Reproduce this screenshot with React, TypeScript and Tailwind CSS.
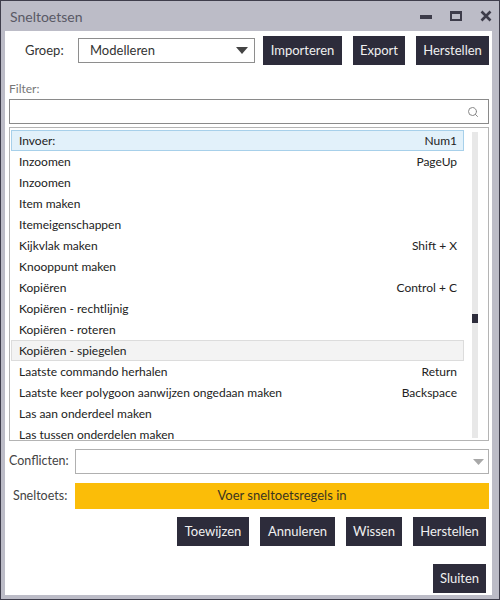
import { Search } from 'lucide-react'

const rows: [string, string][] = [
  ['Invoer:', 'Num1'],
  ['Inzoomen', 'PageUp'],
  ['Inzoomen', ''],
  ['Item maken', ''],
  ['Itemeigenschappen', ''],
  ['Kijkvlak maken', 'Shift + X'],
  ['Knooppunt maken', ''],
  ['Kopiëren', 'Control + C'],
  ['Kopiëren - rechtlijnig', ''],
  ['Kopiëren - roteren', ''],
  ['Kopiëren - spiegelen', ''],
  ['Laatste commando herhalen', 'Return'],
  ['Laatste keer polygoon aanwijzen ongedaan maken', 'Backspace'],
  ['Las aan onderdeel maken', ''],
  ['Las tussen onderdelen maken', ''],
]

function Btn({ label, w }: { label: string; w: string }) {
  return (
    <button className={`h-[29px] ${w} bg-[#2d2c3b] text-[#f0f0f0] text-[13px] flex items-center justify-center`}>
      {label}
    </button>
  )
}

export default function App() {
  return (
    <div className="w-[500px] h-[600px] bg-[#3f3e4c] p-px font-['Lato',sans-serif] text-[12px] text-[#222]">
      <div className="w-full h-full bg-[#bcbcc7] flex flex-col px-1 pb-1">
        {/* Titelbalk */}
        <div className="h-[30px] flex items-center justify-between pl-[5px] pr-[2px]">
          <span className="text-[14px] text-[#595965]">Sneltoetsen</span>
          <div className="flex items-center gap-[18px] text-[#3d3c4a] pr-[1px]">
            <div className="w-[12px] h-[4px] bg-[#3d3c4a] mt-[2px]" />
            <div className="w-[12px] h-[10px] border-[2px] border-t-[3px] border-[#3d3c4a]" />
            <svg width="12" height="12" viewBox="0 0 12 12">
              <path d="M1.5 1.5 L10.5 10.5 M10.5 1.5 L1.5 10.5" stroke="#3d3c4a" strokeWidth="2.6" />
            </svg>
          </div>
        </div>

        {/* Inhoud */}
        <div className="flex-1 bg-white flex flex-col pl-[4px] pr-[3px] mr-[3px]">
          <div className="flex items-center h-[31px] mt-[4px]">
            <span className="w-[69px] pl-[16px] text-[13px] text-[#333]">Groep:</span>
            <div className="w-[177px] h-[25px] border border-[#8e8e8e] flex items-center justify-between pl-[11px] pr-[6px] text-[13px] text-[#333]">
              Modelleren
              <svg width="12" height="7" viewBox="0 0 12 7">
                <path d="M0 0 H12 L6 7 Z" fill="#444" />
              </svg>
            </div>
            <div className="flex gap-[11px] ml-[8px]">
              <Btn label="Importeren" w="w-[79px]" />
              <Btn label="Export" w="w-[52px]" />
              <Btn label="Herstellen" w="w-[73px]" />
            </div>
          </div>

          <div className="mt-[15px] text-[12px] text-[#777] leading-[15px]">Filter:</div>
          <div className="mt-[3px] h-[25px] border border-[#8a8a8a] flex items-center justify-end pr-[9px]">
            <Search size={12} strokeWidth={2} className="text-[#888]" />
          </div>

          <div className="mt-[3px] h-[314px] border border-[#b4b4b4] flex pt-[2px] pl-px">
            <div className="flex-1 flex flex-col">
              {rows.map(([name, key], i) => (
                <div
                  key={i}
                  className={`h-[21px] flex items-center justify-between pl-[7px] pr-[6px] pt-px border ${
                    i === 0
                      ? 'bg-[#e2f1fa] border-[#a7d0ea]'
                      : i === 10
                        ? 'bg-[#f3f3f3] border-[#dcdcdc]'
                        : 'border-transparent'
                  }`}
                >
                  <span>{name}</span>
                  <span>{key}</span>
                </div>
              ))}
            </div>
            <div className="w-[6px] ml-[8px] mr-[10px] mt-[2px] mb-[2px] bg-[#e8e8e8] flex flex-col">
              <div className="h-[182px]" />
              <div className="h-[9px] bg-[#2d2c3b]" />
            </div>
          </div>

          <div className="flex items-center mt-[8px]">
            <span className="w-[66px] text-[12.5px] text-[#444]">Conflicten:</span>
            <div className="flex-1 h-[25px] border border-[#b0b0b0] flex items-center justify-end pr-[4px]">
              <svg width="11" height="6" viewBox="0 0 11 6">
                <path d="M0 0 H11 L5.5 6 Z" fill="#a8a8a8" />
              </svg>
            </div>
          </div>

          <div className="flex items-center mt-[9px]">
            <span className="w-[66px] pl-[4px] text-[12.5px] text-[#444]">Sneltoets:</span>
            <div className="flex-1 h-[26px] bg-[#fbbd08] flex items-center justify-center text-[13px] text-[#3a3520]">
              Voer sneltoetsregels in
            </div>
          </div>

          <div className="flex justify-end gap-[11px] mt-[8px] pr-[3px]">
            <Btn label="Toewijzen" w="w-[72px]" />
            <Btn label="Annuleren" w="w-[75px]" />
            <Btn label="Wissen" w="w-[56px]" />
            <Btn label="Herstellen" w="w-[73px]" />
          </div>

          <div className="flex justify-end mt-[18px] pr-[3px]">
            <Btn label="Sluiten" w="w-[53px]" />
          </div>
        </div>
      </div>
    </div>
  )
}
